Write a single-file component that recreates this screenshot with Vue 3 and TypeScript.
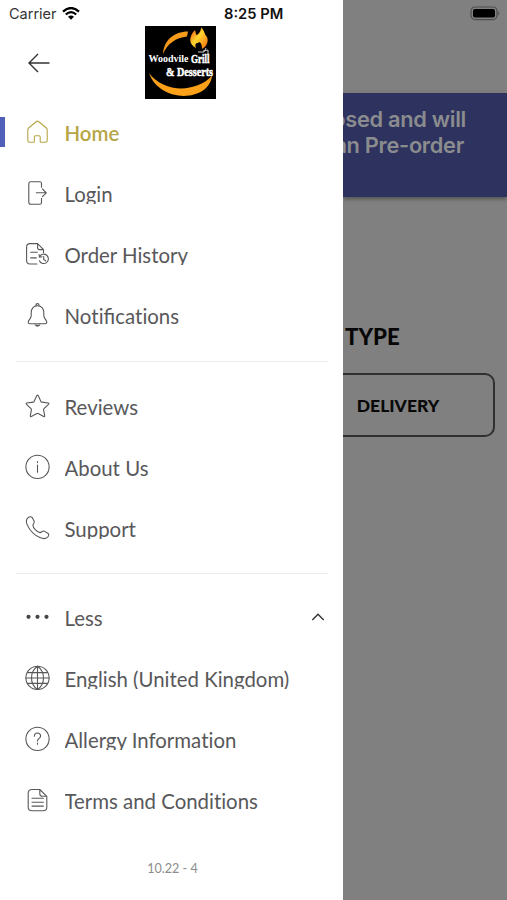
<script setup lang="ts">
interface MenuItem {
  label: string
  icon: string[]
  dots?: boolean
  active?: boolean
  expandable?: boolean
}

const circle = 'M12.5 .3a11.6 11.6 0 1 1 0 23.2a11.6 11.6 0 1 1 0-23.2Z'

const sections: MenuItem[][] = [
  [
    {
      label: 'Home',
      active: true,
      icon: ['M11.5 1.5 3.6 8Q2.8 8.7 2.8 9.7V20.6Q2.8 22.3 4.5 22.3H8.4Q9.3 22.3 9.3 21.4V17Q9.3 15.7 10.6 15.7H13.9Q15.2 15.7 15.2 17V21.4Q15.2 22.3 16.1 22.3H20.4Q22.2 22.3 22.2 20.6V9.7Q22.2 8.7 21.4 8L13.5 1.5Q12.5.7 11.5 1.5Z'],
    },
    {
      label: 'Login',
      icon: ['M16.5 6.3V2.6Q16.5.8 14.7.8H5.8Q3.8.8 3.8 2.8V21.2Q3.8 23.2 5.8 23.2H14.7Q16.5 23.2 16.5 21.4V17.3', 'M11.3 11.8H21.3M17.5 8 21.3 11.8 17.5 15.6'],
    },
    {
      label: 'Order History',
      icon: ['M12 22H5Q1.6 22 1.6 18.6V5Q1.6 1.6 5 1.6H12.6L18.5 7.6V10.4M12.6 1.6V5.5Q12.6 7.6 14.7 7.6H18.5', 'M5.7 10.3H12.3M5.7 15.9H11.3', 'M14.5 14.7A4.7 4.7 0 1 1 14.4 18.8M14.1 12.5 14.4 15.2 17 14.7M18.7 14.6V17.4L20.5 18.8'],
    },
    {
      label: 'Notifications',
      icon: ['M12.5 2.8C8.2 2.8 6.2 6 6.2 9.5V12.5C6.2 15.7 3.2 16.8 3.2 19.2Q3.2 20.7 4.8 20.7H20.2Q21.8 20.7 21.8 19.2C21.8 16.8 18.8 15.7 18.8 12.5V9.5C18.8 6 16.8 2.8 12.5 2.8Z', 'M11 2.8V2Q11 .6 12.5 .6T14 2V2.8M10.2 21.9Q12.5 24.4 14.8 21.9M10.8 22.3H14.2'],
    },
  ],
  [
    {
      label: 'Reviews',
      icon: ['M11.8 1.6Q12.5.4 13.2 1.6L15.9 7.4Q16.2 8 16.9 8.1L23.1 9Q24.4 9.3 23.5 10.3L19 14.7Q18.5 15.2 18.6 15.9L19.7 21.9Q19.8 23.2 18.6 22.6L13.2 19.6Q12.5 19.3 11.8 19.6L6.4 22.6Q5.2 23.2 5.3 21.9L6.4 15.9Q6.5 15.2 6 14.7L1.5 10.3Q.6 9.3 1.9 9L8.1 8.1Q8.8 8 9.1 7.4Z'],
    },
    {
      label: 'About Us',
      icon: [circle, 'M12.5 10V17.2M12.5 6.5V7.6'],
    },
    {
      label: 'Support',
      icon: ['M2.4 2.4C4 .4 6.2.2 7.3 1.7L9.1 5C9.9 6.6 8.1 7.8 7.9 9.2C8 12 12.3 16.3 15 16.6C16.7 16.5 17.3 14.4 19.1 15.1L22.8 17.3C24.2 18.3 23.9 20 22.4 21.4C20.3 23.2 17.6 22.8 14.9 21.6C9.5 19.1 4.3 13.6 2.1 8.6C1.2 6.3 1.1 4 2.4 2.4Z'],
    },
  ],
  [
    { label: 'Less', icon: [], dots: true, expandable: true },
    {
      label: 'English (United Kingdom)',
      icon: [circle, 'M12.5.3V23.5M12.5.3C4.5 6 4.5 18 12.5 23.5C20.5 18 20.5 6 12.5.3M2.6 6.6H22.4M.9 12H24.1M2.6 17.4H22.4'],
    },
    {
      label: 'Allergy Information',
      icon: [circle, 'M9.4 9.2C9.4 5 15.6 5 15.6 8.9C15.6 11.3 12.5 11.4 12.5 14M12.5 16V17.2'],
    },
    {
      label: 'Terms and Conditions',
      icon: ['M14.8 1.5H7Q3.2 1.5 3.2 5.3V19Q3.2 22.8 7 22.8H18Q21.8 22.8 21.8 19V8.3ZM14.8 1.5V5.7Q14.8 8.3 17.4 8.3H21.8', 'M7 10.3H18.4M7 14.2H18.4M7 18.1H18.4'],
    },
  ],
]

// Lato joins "ti" into one glyph; those pairs are set apart so they stay separate letters.
const pieces = (label: string): string[] => label.split(/(ti)/).filter(Boolean)
</script>

<template>
  <div class="screen">
    <aside class="drawer">
      <header class="header">
        <svg class="back" viewBox="0 0 22 20"><path d="M21.5 10H1M10 1 1 10 10 19" /></svg>
        <svg class="logo" viewBox="0 0 71 73">
          <defs>
            <linearGradient id="flame" x1="0" y1="0" x2="1" y2="1">
              <stop offset="0" stop-color="#f0440c" />
              <stop offset=".45" stop-color="#ffd62e" />
              <stop offset="1" stop-color="#f5630f" />
            </linearGradient>
          </defs>
          <rect width="71" height="73" fill="#000" />
          <path d="M18 28C19 14 29 5.5 43 5.5L42 10.5C31 11.5 22 18 18 28Z" fill="#f69a1c" />
          <path d="M4 47C19 67 50 67 67 50C64 76 15 78 4 47Z" fill="#faa019" />
          <path d="M51 22C43 18 44 10 50 4C51 8 51 9 52 9C55 7 56 4 56 1.5C60 5 59 8 62 11C64 16 61 21 57 23C57 18 55 15 53 17Q49 17 51 22Z" fill="url(#flame)" />
          <path d="M53 26H59L61 22M58 25 63 24V28" fill="none" stroke="#ccc" stroke-width="1" />
          <text x="3.5" y="36" class="name" textLength="40" lengthAdjust="spacingAndGlyphs">Woodvile</text>
          <text x="46" y="36.5" class="fancy" textLength="18.5" lengthAdjust="spacingAndGlyphs">Grill</text>
          <text x="21" y="49.5" class="fancy" textLength="47" lengthAdjust="spacingAndGlyphs">&amp; Desserts</text>
        </svg>
      </header>

      <nav class="menu">
        <ul v-for="(items, s) in sections" :key="s" class="section">
          <li v-for="item in items" :key="item.label" class="item" :class="{ active: item.active }">
            <svg class="icon" viewBox="0 0 25 25">
              <g v-if="item.dots" class="dots">
                <circle cx="3.5" cy="11.8" r="2.1" />
                <circle cx="12.5" cy="11.8" r="2.1" />
                <circle cx="21.5" cy="11.8" r="2.1" />
              </g>
              <path v-for="d in item.icon" :key="d" :d="d" />
            </svg>
            <span class="label"><span v-for="(piece, i) in pieces(item.label)" :key="i" :class="{ apart: piece === 'ti' }">{{ piece }}</span></span>
            <svg v-if="item.expandable" class="chevron" viewBox="0 0 14 8"><path d="M1.3 7 7 1.3 12.7 7" /></svg>
          </li>
        </ul>
      </nav>
      <footer class="version">10.22 - 4</footer>
    </aside>

    <main class="page">
      <section class="banner">
        <p class="line first">osed and will</p>
        <p class="line second">an Pre-order</p>
      </section>
      <h2 class="title">TYPE</h2>
      <button class="delivery">DELIVERY</button>
    </main>

    <div class="status">
      <span class="carrier">Carrier</span>
      <svg class="wifi" viewBox="0 0 18 13">
        <path d="M1 4.6Q9-2.6 17 4.6M3.8 7.5Q9 2.8 14.2 7.5" />
        <path class="solid" d="M6 9.7Q9 7.2 12 9.7L9 12.8Z" />
      </svg>
      <span class="time">8:25 PM</span>
      <svg class="battery" viewBox="0 0 31 15">
        <rect class="shell" x="1" y="1" width="26" height="12.6" rx="4" />
        <rect x="3" y="3" width="22" height="8.6" rx="2" />
        <path class="tip" d="M28.2 5Q30.5 7.3 28.2 9.6Z" />
      </svg>
    </div>
  </div>
</template>

<style>
body {
  margin: 0;
}
</style>

<style scoped>
.screen {
  position: relative;
  display: flex;
  width: 507px;
  height: 900px;
  overflow: hidden;
  background: #808080;
  font-family: Lato, sans-serif;
}
.drawer {
  display: flex;
  flex-direction: column;
  width: 343px;
  flex: none;
  background: #fff;
}
.header {
  display: flex;
  align-items: flex-start;
  height: 102px;
  flex: none;
}
.back {
  width: 22px;
  height: 20px;
  margin: 53px 0 0 28px;
}
.back path,
.chevron path {
  fill: none;
  stroke: #333;
  stroke-width: 1.4;
}
.logo {
  width: 71px;
  height: 73px;
  margin: 25.6px 0 0 95.4px;
}
.name {
  font: 700 10px 'Liberation Serif', serif;
  fill: #fff;
}
.fancy {
  font: 700 12.5px 'Liberation Serif', serif;
  fill: #fff;
  stroke: #fff;
  stroke-width: 0.5;
}
.section {
  list-style: none;
  margin: 0;
  padding: 0;
}
.section + .section::before {
  content: '';
  display: block;
  height: 1px;
  margin: 15px 15px 14px 16px;
  background: #ebebeb;
}
.section:last-child::before {
  margin: 14px 15px 13px 16px;
}
.item {
  display: flex;
  align-items: center;
  box-sizing: border-box;
  height: 61px;
  padding: 0 18px 0 25px;
  color: #58585a;
}
.item.active {
  color: #b6a545;
  padding-left: 0;
}
.item.active::before {
  content: '';
  width: 4.5px;
  height: 30px;
  margin: 0 20.5px 2px 0;
  background: #5060b8;
}
.icon {
  width: 25px;
  height: 25px;
  flex: none;
  overflow: visible;
}
.icon path {
  fill: none;
  stroke: currentColor;
  stroke-width: 1.1;
  stroke-linecap: round;
  stroke-linejoin: round;
}
.dots {
  fill: #454547;
}
.label {
  flex: 1;
  height: 23px;
  margin: -3px 0 0 14.5px;
  overflow: hidden;
  white-space: nowrap;
  font-size: 20.4px;
  line-height: 26px;
}
.apart {
  font-variant-ligatures: no-common-ligatures;
}
.active .label {
  font-weight: 600;
}
.chevron {
  width: 14px;
  height: 8px;
  margin-top: -2px;
}
.version {
  margin: 29px 0 0;
  padding-left: 2px;
  text-align: center;
  font-size: 12.6px;
  line-height: 18px;
  color: #8c8c8c;
}
.page {
  flex: 1;
  min-width: 0;
  padding-top: 93px;
  overflow: hidden;
}
.banner {
  box-sizing: border-box;
  height: 104px;
  padding-top: 13px;
  background: #2d325f;
  box-shadow: 0 2px 4px rgba(0, 0, 0, 0.35);
}
.line {
  display: flex;
  justify-content: flex-end;
  margin: 0;
  white-space: nowrap;
  font: 600 21.8px/26px Inter, sans-serif;
  letter-spacing: -0.3px;
  color: #8b8c8e;
}
.first {
  padding-right: 41px;
}
.second {
  padding-right: 43px;
}
.title {
  margin: 125px 0 0 2px;
  font-size: 22.2px;
  line-height: 30px;
  font-weight: 900;
  color: #060606;
}
.delivery {
  display: block;
  box-sizing: border-box;
  width: 172px;
  height: 64px;
  margin: 21px 0 0 -20px;
  padding: 1px 22px 0 0;
  border: 2px solid #303030;
  border-radius: 10px;
  background: none;
  font: 900 17.5px/24px Lato, sans-serif;
  color: #080808;
}
.status {
  position: absolute;
  inset: 0 0 auto 0;
  display: flex;
  align-items: center;
  height: 27px;
  font-family: Inter, sans-serif;
  font-size: 14.5px;
  color: #111;
}
.carrier {
  width: 47px;
  margin-left: 9px;
  color: #333;
}
.wifi {
  width: 18px;
  height: 13px;
  margin-left: 6px;
}
.wifi path {
  fill: none;
  stroke: #000;
  stroke-width: 2.2;
}
.wifi .solid {
  fill: #000;
  stroke: none;
}
.time {
  width: 62px;
  margin-left: 144px;
  font-weight: 600;
  font-size: 14.7px;
  white-space: nowrap;
}
.battery {
  width: 31px;
  height: 15px;
  margin: 0 6px 0 auto;
}
.battery .shell {
  fill: none;
  stroke: #4d4d4d;
  stroke-width: 1.2;
}
.battery .tip {
  fill: #4d4d4d;
}
</style>
